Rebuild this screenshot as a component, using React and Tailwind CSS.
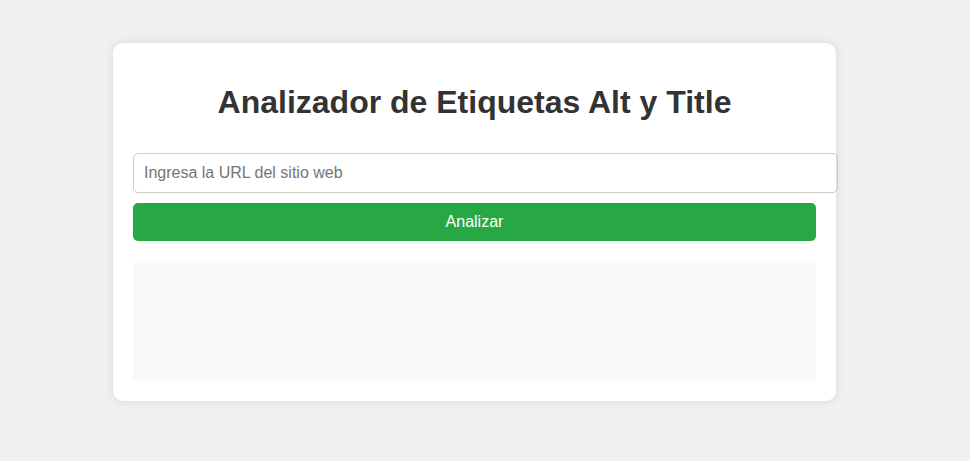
export default function App() {
    return (
        <div className="min-h-screen bg-[#f0f0f0] pt-[43px] pl-[113px] font-['Liberation_Sans',Arial,sans-serif]">
            <div className="w-[723px] bg-white rounded-[10px] p-5 shadow-[0_0_10px_rgba(0,0,0,0.1)]">
                <h1 className="text-[32px] leading-[37px] font-bold text-[#333] text-center mt-[21px] mb-[32px]">
                    Analizador de Etiquetas Alt y Title
                </h1>
                <input
                    type="text"
                    placeholder="Ingresa la URL del sitio web"
                    className="block w-[705px] h-10 px-[10px] text-base text-[#333] placeholder:text-[#757575] border border-[#ccc] rounded-[5px] outline-none"
                />
                <button className="mt-[10px] w-full h-[38px] bg-[#28a745] text-white text-base rounded-[5px]">
                    Analizar
                </button>
                <div className="mt-5 h-[120px] bg-[#f8f9fa] rounded-[5px]"></div>
            </div>
        </div>
    );
}
